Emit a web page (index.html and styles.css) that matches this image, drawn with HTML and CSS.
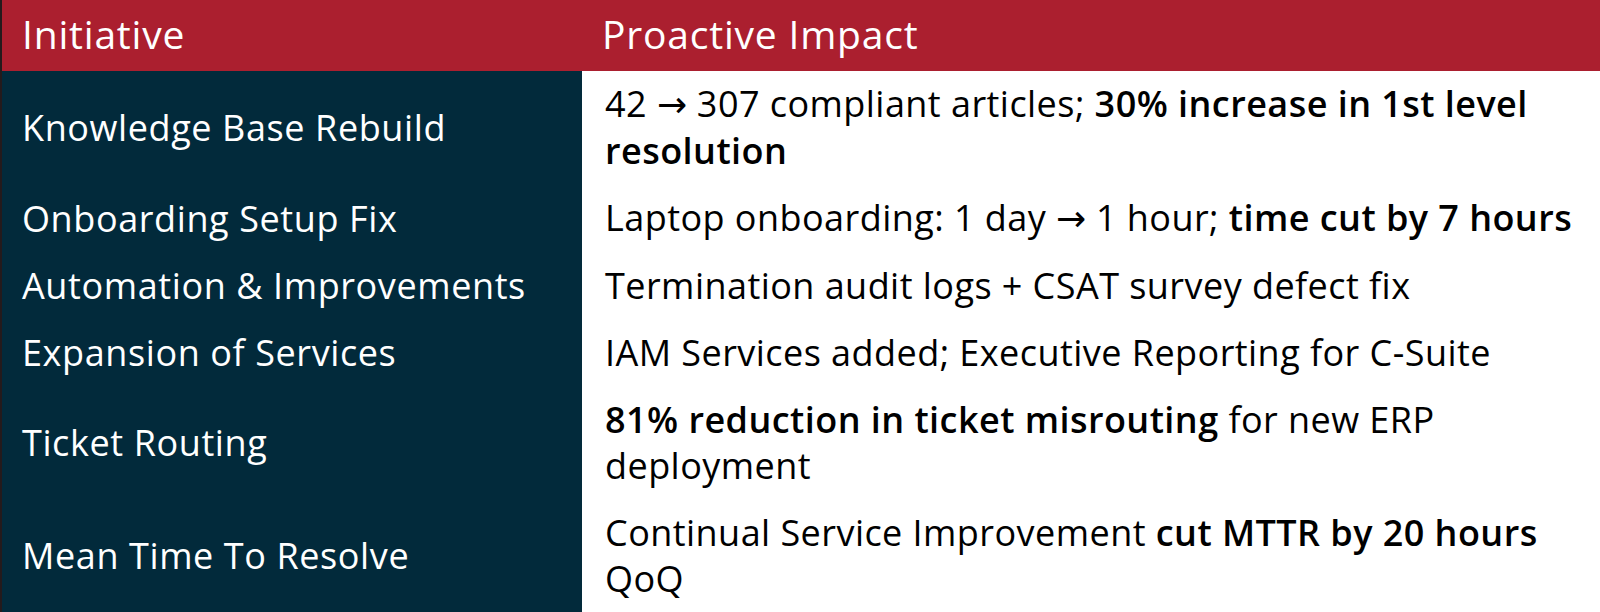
FILE: index.html
```html
<!DOCTYPE html>
<html lang="en">
<head>
<meta charset="utf-8">
<title>Proactive Impact</title>
<link rel="stylesheet" href="styles.css">
</head>
<body>
<div class="table">
  <div class="cell head">Initiative</div>
  <div class="cell head">Proactive Impact</div>

  <div class="cell name">Knowledge Base Rebuild</div>
  <div class="cell impact">42 <span class="arrow">→</span> 307 compliant articles; <b>30% increase in 1st level resolution</b></div>

  <div class="cell name">Onboarding Setup Fix</div>
  <div class="cell impact">Laptop onboarding: 1 day <span class="arrow">→</span> 1 hour; <b>time cut by 7 hours</b></div>

  <div class="cell name">Automation &amp; Improvements</div>
  <div class="cell impact">Termination audit logs + CSAT survey defect fix</div>

  <div class="cell name">Expansion of Services</div>
  <div class="cell impact">IAM Services added; Executive Reporting for C-Suite</div>

  <div class="cell name">Ticket Routing</div>
  <div class="cell impact"><b>81% reduction in ticket misrouting</b> for new ERP deployment</div>

  <div class="cell name">Mean Time To Resolve</div>
  <div class="cell impact">Continual Service Improvement <b>cut MTTR by 20 hours</b> QoQ</div>
</div>
</body>
</html>
```

FILE: styles.css
```css
html, body {
  margin: 0;
  padding: 0;
  background: #ffffff;
}

body {
  font-family: "Open Sans", "DejaVu Sans", sans-serif;
  font-size: 36px;
  line-height: 46px;
  letter-spacing: 0.6px;
  color: #000000;
}

.table {
  display: grid;
  grid-template-columns: 580px 1fr;
  width: 1600px;
  border-left: 2px solid #241a1c;
  box-sizing: border-box;
}

.cell {
  padding: 10px 8px 11px 20px;
  display: flex;
  align-items: center;
}

.head {
  background: #ab1f2f;
  color: #ffffff;
  height: 71px;
  box-sizing: border-box;
  padding-top: 0;
  padding-bottom: 4px;
  font-size: 39px;
  letter-spacing: 0.8px;
}

.name {
  background: #022a3b;
  color: #ffffff;
}

.impact {
  display: block;
  padding-left: 23px;
  letter-spacing: 0.45px;
}

.impact b {
  font-weight: 600;
}

.arrow {
  font-family: "DejaVu Sans", sans-serif;
  letter-spacing: 0;
}
```
